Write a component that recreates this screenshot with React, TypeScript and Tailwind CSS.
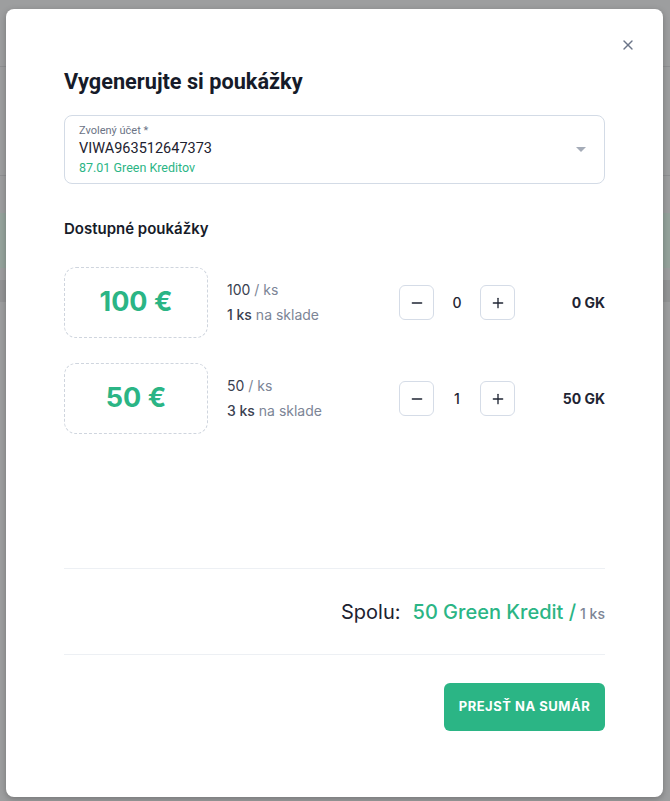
import { X, Minus, Plus } from 'lucide-react';

const green = 'text-[#2bb585]';

type Voucher = { value: number; stock: number; qty: number };

const vouchers: Voucher[] = [
  { value: 100, stock: 1, qty: 0 },
  { value: 50, stock: 3, qty: 1 },
];

const VoucherRow = ({ v }: { v: Voucher }) => (
  <div className="flex items-center">
    <div className="flex h-[71px] w-[144px] shrink-0 items-center justify-center rounded-xl border border-dashed border-[#cfd5de]">
      <span className={`text-[27px] font-bold ${green}`}>{v.value} €</span>
    </div>
    <div className="ml-[19px] flex w-[150px] flex-col gap-[5px] text-[14px] leading-5">
      <span className="text-[#3a4150]">
        {v.value} <span className="text-[#7c8596]">/ ks</span>
      </span>
      <span className="text-[#3a4150]">
        <span className="font-medium">{v.stock} ks</span> <span className="text-[#7c8596]">na sklade</span>
      </span>
    </div>
    <div className="ml-[22px] flex items-center">
      <button
        type="button"
        className="flex h-[35px] w-[35px] items-center justify-center rounded-md border border-[#d5dce7] text-[#1f2533]"
      >
        <Minus className="h-4 w-4" strokeWidth={2} />
      </button>
      <span className="w-[46px] text-center text-[14px] font-medium text-[#1f2533]">{v.qty}</span>
      <button
        type="button"
        className="flex h-[35px] w-[35px] items-center justify-center rounded-md border border-[#d5dce7] text-[#1f2533]"
      >
        <Plus className="h-4 w-4" strokeWidth={2} />
      </button>
    </div>
    <span className="ml-auto text-[14px] font-bold text-[#1f2533]">{v.value * v.qty} GK</span>
  </div>
);

export default function App() {
  return (
    <div
      className="relative h-[801px] w-[670px] overflow-hidden bg-[#9d9e9f]"
      style={{ fontFamily: 'Inter, Roboto, "Noto Sans", sans-serif' }}
    >
      {/* faint page behind overlay */}
      <div className="absolute left-0 top-[66px] h-px w-full bg-[#8f9092]" />
      <div className="absolute left-0 top-[175px] h-px w-full bg-[#8f9092]" />
      <div className="absolute left-0 top-[280px] h-[22px] w-full bg-[#939495]" />
      <div className="absolute left-0 top-[213px] h-[55px] w-full bg-[#95a39c]" />

      <div className="absolute left-[6px] top-[9px] flex h-[788px] w-[657px] flex-col rounded-lg bg-white px-[58px] pt-[59px] shadow-[0_2px_6px_rgba(0,0,0,0.25)]">
        <button type="button" className="absolute right-[27px] top-[28px] text-[#6b7588]">
          <X className="h-[16px] w-[16px]" strokeWidth={2} />
        </button>

        <h1
          className="text-[21.7px] font-bold leading-7 text-[#161b29]"
          style={{ fontFamily: 'Roboto, "Noto Sans", sans-serif' }}
        >
          Vygenerujte si poukážky
        </h1>

        <div
          className="mt-[19px] flex h-[69px] items-center rounded-lg border border-[#d3dbe6] pl-[14px] pr-[18px]"
          style={{ fontFamily: 'Roboto, "Noto Sans", sans-serif' }}
        >
          <div className="flex flex-col">
            <span className="text-[11px] leading-4 text-[#6b7385]">Zvolený účet *</span>
            <span className="text-[14.5px] leading-5 text-[#1d2230]">VIWA963512647373</span>
            <span className={`text-[12.5px] leading-[18px] ${green}`}>87.01 Green Kreditov</span>
          </div>
          <svg className="ml-auto" width="10" height="5" viewBox="0 0 10 5">
            <path d="M0 0 L10 0 L5 5 Z" fill="#a5acb8" />
          </svg>
        </div>

        <h2 className="mt-[33px] text-[15px] font-semibold leading-6 text-[#161b29]">Dostupné poukážky</h2>

        <div className="mt-[26px] flex flex-col gap-[25px]">
          {vouchers.map((v) => (
            <VoucherRow key={v.value} v={v} />
          ))}
        </div>

        <div className="mt-[134px] h-px bg-[#edf0f4]" />

        <div className="flex h-[85px] items-center justify-end">
          <span className="text-[20px] text-[#1d2230]">Spolu:</span>
          <span className={`ml-[12px] text-[20px] font-medium ${green}`}>50 Green Kredit /</span>
          <span className="ml-[4px] mt-[4px] text-[14px] font-medium text-[#7c8596]">1 ks</span>
        </div>

        <div className="h-px bg-[#edf0f4]" />

        <div className="mt-[28px] flex justify-end">
          <button
            type="button"
            className="h-[48px] w-[161px] rounded-md bg-[#2bb585] text-[13px] font-bold tracking-[0.04em] text-white"
          >
            PREJSŤ NA SUMÁR
          </button>
        </div>
      </div>
    </div>
  );
}
